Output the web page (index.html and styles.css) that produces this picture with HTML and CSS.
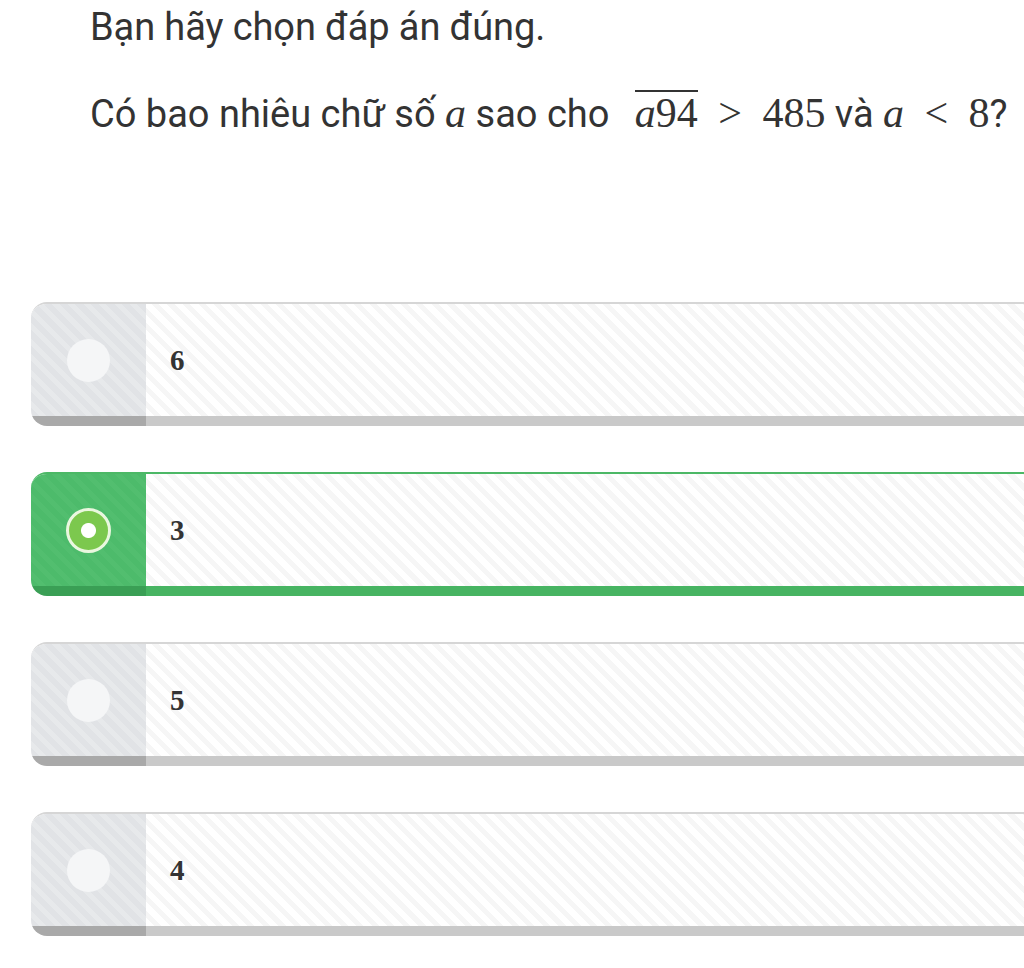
FILE: index.html
```html
<!DOCTYPE html>
<html lang="vi">
<head>
<meta charset="UTF-8">
<meta name="viewport" content="width=device-width, initial-scale=1.0">
<title>Chọn đáp án</title>
<link rel="stylesheet" href="styles.css">
</head>
<body>
<div class="quiz">
    <div class="question">
        <p class="hint">Bạn hãy chọn đáp án đúng.</p>
        <p class="ask">Có bao nhiêu chữ số <span class="m mi">a</span> sao cho <span class="m bar"><span class="mi">a</span>94</span> <span class="m op">&gt;</span> <span class="m">485</span> và <span class="m mi">a</span> <span class="m op">&lt;</span> <span class="m">8</span>?</p>
    </div>
    <div class="options">
        <div class="option">
            <div class="option-side"><span class="radio"></span></div>
            <div class="option-body"><span class="m num">6</span></div>
        </div>
        <div class="option selected">
            <div class="option-side"><span class="radio"></span></div>
            <div class="option-body"><span class="m num">3</span></div>
        </div>
        <div class="option">
            <div class="option-side"><span class="radio"></span></div>
            <div class="option-body"><span class="m num">5</span></div>
        </div>
        <div class="option">
            <div class="option-side"><span class="radio"></span></div>
            <div class="option-body"><span class="m num">4</span></div>
        </div>
    </div>
</div>
</body>
</html>
```
FILE: styles.css
```css
body {
    font-family: Roboto, 'Liberation Sans', sans-serif;
    background-color: #ffffff;
    color: #333333;
    margin: 0;
    overflow: hidden;
}
.quiz {
    padding-left: 31px;
}
.question {
    padding-left: 59px;
}
.hint {
    font-size: 38px;
    line-height: 40px;
    margin: 7px 0 0 0;
    letter-spacing: -0.1px;
}
.ask {
    font-size: 38px;
    line-height: 40px;
    margin: 43px 0 0 0;
    letter-spacing: 0;
    white-space: nowrap;
}
.m {
    font-family: 'Liberation Serif', 'DejaVu Serif', serif;
    font-size: 42px;
    letter-spacing: 0;
}
.mi {
    font-style: italic;
}
.bar {
    display: inline-block;
    border-top: 2px solid #333;
    line-height: 36px;
    padding-top: 3px;
    margin-left: 16px;
}
.op {
    margin: 0 11px;
}
.options {
    margin-top: 168px;
    margin-right: -60px;
}
.option {
    display: flex;
    height: 122px;
    margin-bottom: 46px;
    border-top: 2px solid #d6d6d6;
    border-radius: 16px 0 0 16px;
    overflow: hidden;
}
.option-side {
    width: 115px;
    flex-shrink: 0;
    display: flex;
    align-items: center;
    justify-content: center;
    background: repeating-linear-gradient(45deg, #e1e3e6 0 6px, #e7e9eb 6px 11px);
    border-bottom: 10px solid #a9a9a9;
}
.option-body {
    flex: 1;
    display: flex;
    align-items: center;
    padding-left: 24px;
    background: repeating-linear-gradient(45deg, #ffffff 0 6px, #f6f6f6 6px 11px);
    border-bottom: 10px solid #c9c9c9;
}
.radio {
    width: 43px;
    height: 43px;
    border-radius: 50%;
    background-color: #f5f6f7;
}
.num {
    font-size: 29px;
    font-weight: bold;
    color: #333;
}
.selected {
    border-top-color: #4cb866;
}
.selected .option-side {
    background: repeating-linear-gradient(45deg, #4dbb6b 0 6px, #52be6f 6px 11px);
    border-bottom-color: #3a9f55;
}
.selected .option-body {
    border-bottom-color: #47b462;
}
.selected .radio {
    box-sizing: border-box;
    width: 45px;
    height: 45px;
    border: 3px solid #eaf7df;
    background: radial-gradient(circle, #ffffff 0 7px, #7cc84e 8px);
}
```
